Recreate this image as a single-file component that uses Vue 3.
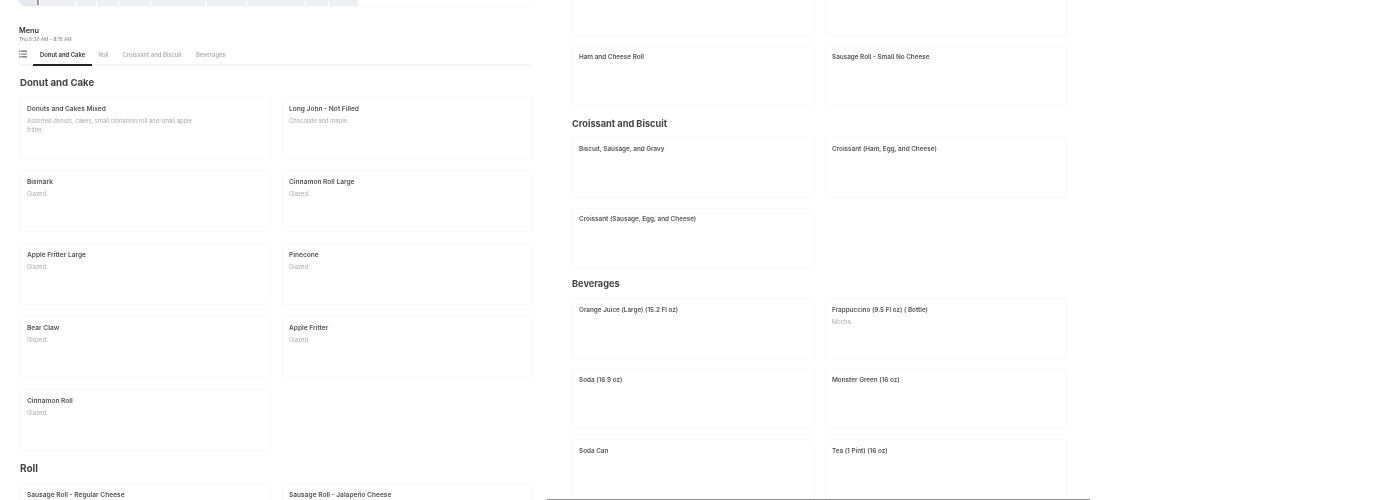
<script setup>
const leftCards = [
  { name: 'Donuts and Cakes Mixed', desc: 'Assorted donuts, cakes, small cinnamon roll and small apple fritter.' },
  { name: 'Long John - Not Filled', desc: 'Chocolate and maple.' },
  { name: 'Bismark', desc: 'Glazed.' },
  { name: 'Cinnamon Roll Large', desc: 'Glazed.' },
  { name: 'Apple Fritter Large', desc: 'Glazed.' },
  { name: 'Pinecone', desc: 'Glazed.' },
  { name: 'Bear Claw', desc: 'Glazed.' },
  { name: 'Apple Fritter', desc: 'Glazed.' },
  { name: 'Cinnamon Roll', desc: 'Glazed.' }
]
const rollCards = ['Sausage Roll - Regular Cheese', 'Sausage Roll - Jalapeño Cheese']
const rollMore = ['Ham and Cheese Roll', 'Sausage Roll - Small No Cheese']
const croissants = ['Biscuit, Sausage, and Gravy', 'Croissant (Ham, Egg, and Cheese)', 'Croissant (Sausage, Egg, and Cheese)']
const beverages = [
  { name: 'Orange Juice (Large) (15.2 Fl oz)' },
  { name: 'Frappuccino (9.5 Fl oz) ( Bottle)', desc: 'Mocha.' },
  { name: 'Soda (16.9 oz)' },
  { name: 'Monster Green (16 oz)' },
  { name: 'Soda Can' },
  { name: 'Tea (1 Pint) (16 oz)' }
]
const tabs = ['Donut and Cake', 'Roll', 'Croissant and Biscuit', 'Beverages']
// map strip, cut off at the top of the page
const mapBlocks = [20, 36, 19, 21, 31, 54, 40, 58, 22, 29]
</script>

<template>
  <div class="page">
    <section class="left">
      <div class="map">
        <span v-for="(w, i) in mapBlocks" :key="i" class="map-block" :style="{ width: w + 'px' }"></span>
        <span class="map-pin"></span>
      </div>
      <div class="menu-head">
        <div class="menu-title">Menu</div>
        <div class="menu-time">Thu 5:30 AM – 8:15 AM</div>
      </div>
      <nav class="tabs">
        <svg class="tabs-icon" width="8" height="8" viewBox="0 0 8 8">
          <path d="M0 .5h1.5v1.2H0zM2.3 .5H8v1.2H2.3zM0 3.4h1.5v1.2H0zM2.3 3.4H8v1.2H2.3zM0 6.3h1.5v1.2H0zM2.3 6.3H8v1.2H2.3z" fill="#666" />
        </svg>
        <a
          v-for="(tab, i) in tabs"
          :key="tab"
          class="tab"
          :class="{ active: i === 0 }"
        >{{ tab }}</a>
      </nav>
      <h2 class="section-title first">Donut and Cake</h2>
      <div class="grid">
        <div v-for="card in leftCards" :key="card.name" class="card">
          <div class="card-name">{{ card.name }}</div>
          <div class="card-desc">{{ card.desc }}</div>
        </div>
      </div>
      <h2 class="section-title roll">Roll</h2>
      <div class="grid">
        <div v-for="name in rollCards" :key="name" class="card">
          <div class="card-name">{{ name }}</div>
        </div>
      </div>
    </section>

    <section class="right">
      <div class="grid-r">
        <div class="card-r cut"></div>
        <div class="card-r cut"></div>
        <div v-for="name in rollMore" :key="name" class="card-r">
          <div class="card-name">{{ name }}</div>
        </div>
      </div>
      <h2 class="section-title r-croissant">Croissant and Biscuit</h2>
      <div class="grid-r">
        <div v-for="name in croissants" :key="name" class="card-r">
          <div class="card-name">{{ name }}</div>
        </div>
      </div>
      <h2 class="section-title r-bev">Beverages</h2>
      <div class="grid-r">
        <div v-for="item in beverages" :key="item.name" class="card-r">
          <div class="card-name">{{ item.name }}</div>
          <div v-if="item.desc" class="card-desc">{{ item.desc }}</div>
        </div>
      </div>
    </section>
    <div class="bottom-line"></div>
  </div>
</template>

<style>
html, body { background: #fff; }
</style>

<style scoped>
.page {
  position: relative;
  display: flex;
  align-items: flex-start;
  width: 1400px;
  height: 500px;
  overflow: hidden;
  background: #fff;
  font-family: Inter, "Liberation Sans", sans-serif;
  color: #333;
  /* reference is a scaled-down capture, text is soft */
  filter: blur(0.3px);
}

.left {
  width: 513px;
  margin-left: 19px;
  flex: none;
}

.right {
  width: 495px;
  margin-left: 40px;
  flex: none;
}

.map {
  position: relative;
  display: flex;
  gap: 1px;
  height: 6px;
  border-bottom: 1px solid #f7f7f7;
  border-bottom-left-radius: 6px;
}

.map-block {
  height: 6px;
  background: #eef0f4;
}

.map-block:first-child {
  border-bottom-left-radius: 6px;
  background: #e3e8f1;
}

.map-pin {
  position: absolute;
  left: 18px;
  top: 0;
  width: 2px;
  height: 5px;
  background: #9a9ca0;
}

.menu-head {
  padding-top: 19px;
}

.menu-title {
  font-size: 7.3px;
  line-height: 9px;
  font-weight: 600;
  color: #333;
}

.menu-time {
  margin-top: 1px;
  font-size: 4.8px;
  line-height: 7px;
  color: #808080;
}

.tabs {
  display: flex;
  align-items: flex-start;
  height: 23px;
  border-bottom: 2px solid #f5f5f5;
  box-sizing: border-box;
}

.tabs-icon {
  margin-top: 7px;
  flex: none;
}

.tab {
  padding: 6.5px 7px 0;
  height: 23px;
  box-sizing: border-box;
  font-size: 5.9px;
  line-height: 9px;
  font-weight: 500;
  color: #a6a6a6;
  white-space: nowrap;
}

.tab.active {
  margin-left: 6px;
  margin-right: -1px;
  font-weight: 600;
  color: #333;
  border-bottom: 2px solid #222;
}

.section-title {
  margin: 0;
  font-size: 9.6px;
  line-height: 14px;
  font-weight: 700;
  color: #444;
}

.section-title.first {
  margin: 10px 0 7px 1px;
}

.section-title.roll {
  margin: 10px 0 8px 1px;
  font-size: 10px;
}

.section-title.r-croissant {
  margin: 11px 0 6px 0;
  font-size: 9.2px;
}

.section-title.r-bev {
  margin: 9px 0 7px 0;
  font-size: 9.2px;
}

.grid {
  display: grid;
  grid-template-columns: 251px 250px;
  column-gap: 11px;
  row-gap: 11px;
  margin-left: 1px;
}

.grid-r {
  display: grid;
  grid-template-columns: 243px 242px;
  column-gap: 10px;
  row-gap: 10px;
}

.card,
.card-r {
  height: 62px;
  padding: 6.5px 6px;
  box-sizing: border-box;
  border: 1px solid #f8f8f8;
  border-radius: 3px;
  background: #fff;
}

.card-r {
  height: 60.5px;
}

.card-r.cut {
  height: 35.5px;
  border-top: none;
  border-radius: 0 0 3px 3px;
}

.card-name {
  font-size: 6.6px;
  line-height: 9px;
  font-weight: 600;
  color: #555;
}

.card-r .card-name {
  font-size: 6.35px;
}

.card-desc {
  width: 170px;
  margin-top: 3.5px;
  font-size: 5.8px;
  line-height: 8.5px;
  color: #aaa;
}

.bottom-line {
  position: absolute;
  left: 547px;
  bottom: 0;
  width: 543px;
  height: 1px;
  background: #8f8f8f;
}
</style>
